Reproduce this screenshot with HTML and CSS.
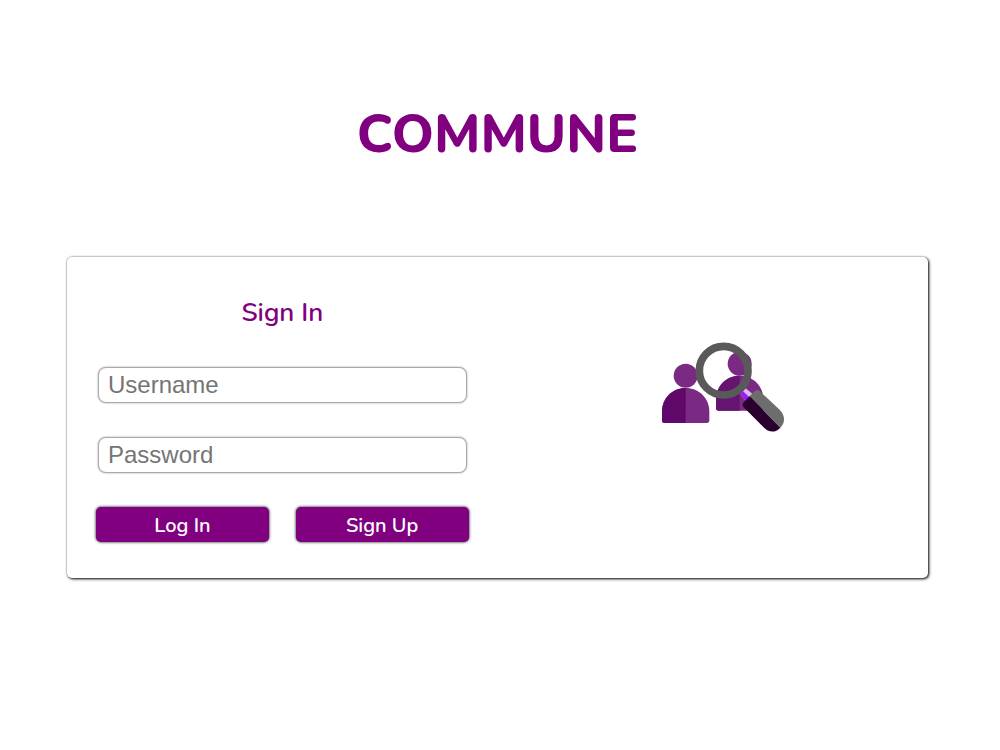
FILE: index.html
```
<!DOCTYPE html>
<html lang="en">
<head>
    <meta charset="UTF-8">
    <meta name="viewport" content="width=device-width, initial-scale=1.0">
    <title>Commune</title>
    <link rel="stylesheet" href="styles.css">
</head>
<body>

    <h1 class="title">COMMUNE</h1>

    <main class="card">

        <!-- Sign in form -->
        <form class="signin">
            <h2>Sign In</h2>
            <input type="text" name="username" placeholder="Username" aria-label="Username">
            <input type="password" name="password" placeholder="Password" aria-label="Password">
            <div class="buttons">
                <button type="submit">Log In</button>
                <button type="button">Sign Up</button>
            </div>
        </form>

        <!-- Logo -->
        <div class="logo">
            <svg viewBox="0 0 450 345" role="img" aria-label="People search">
                <!-- left person -->
                <circle cx="107" cy="137" r="36" fill="#7b2a84"/>
                <path d="M36 245C36 205 67 174 107 174S178 205 178 245V271Q178 279 170 279H44Q36 279 36 271Z" fill="#7b2a84"/>
                <path d="M107 174C67 174 36 205 36 245V271Q36 279 44 279H107Z" fill="#5f0869"/>
                <!-- right person -->
                <circle cx="269" cy="101" r="36" fill="#7b2a84"/>
                <path d="M198 208C198 168 229 137 269 137S340 168 340 208V242H206Q198 242 198 234Z" fill="#7b2a84"/>
                <path d="M269 137C229 137 198 168 198 208V234Q198 242 206 242H269Z" fill="#651570"/>
                <!-- magnifying glass -->
                <path d="M272 193L287 175L309 193L288 214Z" fill="#d9b8ee"/>
                <path d="M272 193L279 184L300 203L288 214Z" fill="#9b18ff"/>
                <circle cx="221" cy="122" r="73" fill="none" stroke="#595959" stroke-width="23"/>
                <path d="M299 199L314 184Q322 176 330 184L389 239C404 254 408 275 391 293Z" fill="#6d6d6d"/>
                <path d="M299 199L281 217Q274 224 281 232L340 291C356 308 375 310 391 293Z" fill="#29002e"/>
            </svg>
        </div>

    </main>

</body>
</html>
```
FILE: styles.css
```
* { box-sizing: border-box; }
body { margin: 0; padding: 97px 72px 40px 67px; background: white; font-family: Nunito, Lato, sans-serif; color: purple; }
.title { margin: 0 0 84px; font-size: 53px; line-height: 76px; font-weight: 800; text-align: center; }
.card { display: grid; grid-template-columns: 1fr 1fr; background: white; border-radius: 5px; box-shadow: 1px 1px 3px black, 0 0 2px #aaa; }
.signin { display: flex; flex-direction: column; gap: 34px; padding: 38px 29px 36px; }
.signin h2 { margin: 0 0 2px; font-size: 26px; line-height: 36px; font-weight: 600; text-align: center; }
.signin input { height: 36px; margin: 0 2px; padding: 0 9px 1px; border: 1px solid #aaa; border-radius: 8px; box-shadow: 0 0 2px #999; font-family: Arial, "Liberation Sans", sans-serif; font-size: 24px; outline: none; }
.signin input::placeholder { color: #757575; }
.buttons { display: flex; gap: 27px; }
.buttons button { flex: 1; height: 35px; padding: 2px 0 0; border: none; border-radius: 5px; background: purple; color: white; box-shadow: 0 0 3px black; font-family: inherit; font-size: 20px; font-weight: 600; cursor: pointer; }
.logo { padding: 73px 0 0 24px; text-align: center; }
.logo svg { width: 150px; height: 115px; }
@media (max-width: 700px) {
    .card { grid-template-columns: 1fr; }
    .logo { padding: 0 0 36px; }
}
```
